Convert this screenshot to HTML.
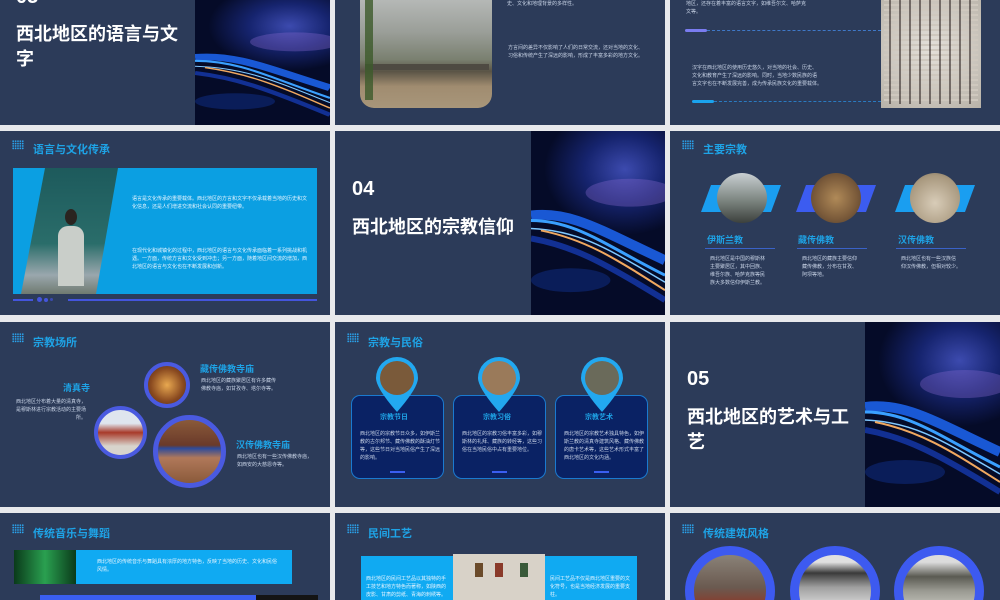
<!DOCTYPE html>
<html><head><meta charset="utf-8">
<style>
*{margin:0;padding:0;box-sizing:border-box}
html{width:1000px;height:600px;overflow:hidden}
body{width:1000px;height:600px;background:#e8e9ec;position:relative;overflow:hidden;font-family:"Liberation Sans","Noto Sans CJK SC",sans-serif}
.s{position:absolute;background:#2c3b59;overflow:hidden}
.a{position:absolute}
.t{position:absolute;color:#1ea3e6;font-weight:bold;font-size:11px;white-space:nowrap}
.big{position:absolute;color:#fff;font-weight:bold;font-size:18px;line-height:25px}
.num{position:absolute;color:#fff;font-weight:bold;font-size:20px}
.p{position:absolute;color:#c8d3e6;font-size:5px;line-height:8px}
.grid{position:absolute;width:12px;height:10px;background-image:radial-gradient(circle,#2aa6f0 0.8px,transparent 1px);background-size:2.4px 2.4px}
</style></head><body>

<svg width="0" height="0" style="position:absolute"><defs>
<radialGradient id="gl" cx="0.7" cy="0.35" r="0.6"><stop offset="0" stop-color="#4a5ad0"/><stop offset=".5" stop-color="#1a2a80"/><stop offset="1" stop-color="#050b28"/></radialGradient>
<symbol id="w" viewBox="0 0 135 185" preserveAspectRatio="none">
<rect width="135" height="185" fill="#050b28"/>
<rect width="135" height="110" fill="url(#gl)" opacity=".8"/>
<ellipse cx="100" cy="62" rx="45" ry="14" fill="#8a6ad0" opacity=".35"/>
<path d="M0 85 C40 80 70 100 135 130" stroke="#1e6cff" stroke-width="10" fill="none" opacity=".8"/>
<path d="M0 90 C45 90 75 115 135 145" stroke="#3aa0ff" stroke-width="3" fill="none"/>
<path d="M0 98 C50 100 80 120 135 152" stroke="#7fc8ff" stroke-width="1.5" fill="none"/>
<path d="M10 100 C60 110 95 135 135 160" stroke="#f0a860" stroke-width="2" fill="none"/>
<path d="M0 108 C40 115 70 130 135 170" stroke="#1840c0" stroke-width="6" fill="none" opacity=".7"/>
<ellipse cx="40" cy="150" rx="40" ry="12" fill="#0d2a7a" opacity=".6"/>
</symbol></defs></svg>

<!-- Row 0 -->
<div class="s" style="left:0;top:0;width:330px;height:125px">
 <div class="num" style="left:16px;top:-14px">03</div>
 <div class="big" style="left:16px;top:22px;width:168px">西北地区的语言与文字</div>
 <svg class="a" style="left:195px;top:0" width="135" height="125"><use href="#w" width="135" height="125"/></svg>
</div>
<div class="s" style="left:335px;top:0;width:330px;height:125px">
 <div class="a" style="left:25px;top:0;width:132px;height:108px;border-radius:0 0 14px 14px;background:linear-gradient(180deg,#b5b8b6 0%,#9a9e98 30%,#7a8070 55%,#5a5446 66%,#a08c70 80%,#a8967a 100%)"></div>
 <div class="a" style="left:30px;top:64px;width:124px;height:6px;background:#4e4a42"></div>
 <div class="a" style="left:30px;top:0;width:8px;height:100px;background:#3c5a2a;opacity:.8"></div>
 <div class="p" style="left:172px;top:0">史、文化和地理背景的多样性。</div>
 <div class="p" style="left:173px;top:44px">方言间的差异不仅影响了人们的日常交流，还对当地的文化、<br>习俗和传统产生了深远的影响，形成了丰富多彩的地方文化。</div>
</div>
<div class="s" style="left:670px;top:0;width:330px;height:125px">
 <div class="p" style="left:16px;top:0">地区，还存在着丰富的语言文字，如维吾尔文、哈萨克<br>文等。</div>
 <div class="a" style="left:15px;top:29px;width:22px;height:3px;border-radius:2px;background:#7a7cf0"></div>
 <div class="a" style="left:37px;top:30px;width:174px;border-top:1px dashed #3f78c8"></div>
 <div class="p" style="left:22px;top:64px">汉字在西北地区的使用历史悠久，对当地的社会、历史、<br>文化和教育产生了深远的影响。同时，当地少数民族的语<br>言文字也在不断发展完善，成为传承民族文化的重要载体。</div>
 <div class="a" style="left:22px;top:100px;width:22px;height:3px;border-radius:2px;background:#1aa3ee"></div>
 <div class="a" style="left:44px;top:101px;width:167px;border-top:1px dashed #2a7ac0"></div>
 <div class="a" style="left:211px;top:0;width:100px;height:108px;background:radial-gradient(circle at 50% 45%,#e4e0da,#b8b2a8);"></div>
 <div class="a" style="left:214px;top:0;width:94px;height:104px;background-image:repeating-linear-gradient(90deg,transparent 0 5px,rgba(40,30,30,.55) 5px 7px,transparent 7px 10px),repeating-linear-gradient(0deg,transparent 0 3px,#cfc8be 3px 5px)"></div>
</div>

<!-- Row 1 -->
<div class="s" style="left:0;top:131px;width:330px;height:184px">
 <div class="grid" style="left:12px;top:9px"></div>
 <div class="t" style="left:33px;top:10px">语言与文化传承</div>
 <div class="a" style="left:13px;top:37px;width:304px;height:126px;background:#0b9fe2"></div>
 <div class="a" style="left:13px;top:37px;width:106px;height:126px;background:linear-gradient(180deg,#1d5a5c,#2a6d6a 60%,#9aa7ad 85%,#6f7a70);clip-path:polygon(32px 0,105px 0,83px 126px,8px 126px)"></div>
 <div class="a" style="left:58px;top:95px;width:26px;height:60px;border-radius:10px 10px 0 0;background:#c9cec9"></div>
 <div class="a" style="left:65px;top:78px;width:12px;height:16px;border-radius:50%;background:#2a2420"></div>
 <div class="p" style="left:132px;top:64px;color:#e4f4ff">语言是文化传承的重要载体。西北地区的方言和文字不仅承载着当地的历史和文<br>化信息，还是人们增进交流和社会认同的重要纽带。</div>
 <div class="p" style="left:132px;top:116px;color:#e4f4ff">在现代化和城镇化的过程中，西北地区的语言与文化传承面临着一系列挑战和机<br>遇。一方面，传统方言和文化受到冲击；另一方面，随着地区间交流的增加，西<br>北地区的语言与文化也在不断发展和创新。</div>
 <div class="a" style="left:13px;top:168px;width:20px;height:2px;background:#4455dd"></div>
 <div class="a" style="left:37px;top:166px;width:5px;height:5px;border-radius:50%;background:#4455dd"></div>
 <div class="a" style="left:44px;top:167px;width:4px;height:4px;border-radius:50%;background:#4455dd"></div>
 <div class="a" style="left:50px;top:167px;width:3px;height:3px;border-radius:50%;background:#3a4ab0"></div>
 <div class="a" style="left:68px;top:168px;width:249px;height:2px;background:#4455dd"></div>
</div>
<div class="s" style="left:335px;top:131px;width:330px;height:184px">
 <div class="num" style="left:17px;top:47px">04</div>
 <div class="big" style="left:17px;top:84px">西北地区的宗教信仰</div>
 <svg class="a" style="left:196px;top:0" width="134" height="184"><use href="#w" width="134" height="184"/></svg>
</div>
<div class="s" style="left:670px;top:131px;width:330px;height:184px">
 <div class="grid" style="left:12px;top:9px"></div>
 <div class="t" style="left:33px;top:10px">主要宗教</div>
 <div class="a" style="left:31px;top:54px;width:80px;height:27px;background:#1a9ef0;clip-path:polygon(10px 0,100% 0,calc(100% - 10px) 100%,0 100%)"></div>
 <div class="a" style="left:47px;top:42px;width:50px;height:50px;border-radius:50%;background:linear-gradient(180deg,#c9cfd2,#7c8580 55%,#3c403c)"></div>
 <div class="t" style="left:37px;top:102px;font-size:9px">伊斯兰教</div>
 <div class="a" style="left:35px;top:117px;width:70px;height:1px;background:#3a62c8"></div>
 <div class="p" style="left:40px;top:124px">西北地区是中国的穆斯林<br>主要聚居区，其中回族、<br>维吾尔族、哈萨克族等民<br>族大多数信仰伊斯兰教。</div>

 <div class="a" style="left:126px;top:54px;width:80px;height:27px;background:#3c5cf0;clip-path:polygon(10px 0,100% 0,calc(100% - 10px) 100%,0 100%)"></div>
 <div class="a" style="left:141px;top:42px;width:50px;height:50px;border-radius:50%;background:radial-gradient(circle,#b08a58,#7a5a3a 60%,#4a3a30)"></div>
 <div class="t" style="left:128px;top:102px;font-size:9px">藏传佛教</div>
 <div class="a" style="left:127px;top:117px;width:70px;height:1px;background:#3a62c8"></div>
 <div class="p" style="left:132px;top:124px">西北地区的藏族主要信仰<br>藏传佛教，分布在甘孜、<br>阿坝等地。</div>

 <div class="a" style="left:225px;top:54px;width:80px;height:27px;background:#1a9ef0;clip-path:polygon(10px 0,100% 0,calc(100% - 10px) 100%,0 100%)"></div>
 <div class="a" style="left:240px;top:42px;width:50px;height:50px;border-radius:50%;background:radial-gradient(circle at 50% 60%,#d8ccb8,#a8987e 70%,#6a6050)"></div>
 <div class="t" style="left:228px;top:102px;font-size:9px">汉传佛教</div>
 <div class="a" style="left:226px;top:117px;width:70px;height:1px;background:#3a62c8"></div>
 <div class="p" style="left:231px;top:124px">西北地区也有一些汉族信<br>仰汉传佛教，但相对较少。</div>
</div>

<!-- Row 2 -->
<div class="s" style="left:0;top:322px;width:330px;height:185px">
 <div class="grid" style="left:12px;top:11px"></div>
 <div class="t" style="left:33px;top:12px">宗教场所</div>
 <div class="t" style="left:63px;top:59px;font-size:9px">清真寺</div>
 <div class="p" style="left:14px;top:76px;text-align:right;width:72px">西北地区分布着大量的清真寺，<br>是穆斯林进行宗教活动的主要场<br>所。</div>
 <div class="a" style="left:144px;top:40px;width:46px;height:46px;border-radius:50%;border:4px solid #4a5ae0;background:radial-gradient(circle,#e8a850,#8a4a20 60%,#4a2a18)"></div>
 <div class="a" style="left:94px;top:84px;width:53px;height:53px;border-radius:50%;border:4px solid #4a5ae0;background:linear-gradient(180deg,#dfe5ee 30%,#a83a2a 50%,#d8d4cc 80%)"></div>
 <div class="a" style="left:153px;top:93px;width:73px;height:73px;border-radius:50%;border:5px solid #4a5ae0;background:linear-gradient(180deg,#8a5a3a,#6a3a2a 40%,#2d4a9a 45%,#b0785a 60%,#8a5a3a)"></div>
 <div class="t" style="left:200px;top:40px;font-size:9px">藏传佛教寺庙</div>
 <div class="p" style="left:201px;top:55px">西北地区的藏族聚居区有许多藏传<br>佛教寺庙，如甘孜寺、塔尔寺等。</div>
 <div class="t" style="left:236px;top:116px;font-size:9px">汉传佛教寺庙</div>
 <div class="p" style="left:237px;top:131px">西北地区也有一些汉传佛教寺庙，<br>如西安的大慈恩寺等。</div>
</div>
<div class="s" style="left:335px;top:322px;width:330px;height:185px">
 <div class="grid" style="left:12px;top:11px"></div>
 <div class="t" style="left:33px;top:12px">宗教与民俗</div>
 <div class="a" style="left:16px;top:73px;width:93px;height:84px;border-radius:9px;border:1px solid #1a7ad0;background:#0a2264"></div>
 <div class="a" style="left:118px;top:73px;width:93px;height:84px;border-radius:9px;border:1px solid #1a7ad0;background:#0a2264"></div>
 <div class="a" style="left:220px;top:73px;width:93px;height:84px;border-radius:9px;border:1px solid #1a7ad0;background:#0a2264"></div>
 <svg class="a" style="left:0;top:0" width="330" height="100">
  <g fill="#22a8f0"><path d="M41 56 a21 21 0 1 1 42 0 q0 10 -21 34 q-21 -24 -21 -34z"/><path d="M143 56 a21 21 0 1 1 42 0 q0 10 -21 34 q-21 -24 -21 -34z"/><path d="M246 56 a21 21 0 1 1 42 0 q0 10 -21 34 q-21 -24 -21 -34z"/></g>
  <circle cx="62" cy="56" r="17" fill="#7a5a3a"/><circle cx="164" cy="56" r="17" fill="#9a7a5a"/><circle cx="267" cy="56" r="17" fill="#6a6a5a"/>
 </svg>
 <div class="t" style="left:45px;top:90px;font-size:7px">宗教节日</div>
 <div class="t" style="left:148px;top:90px;font-size:7px">宗教习俗</div>
 <div class="t" style="left:250px;top:90px;font-size:7px">宗教艺术</div>
 <div class="p" style="left:25px;top:108px;width:80px">西北地区的宗教节日众多，如伊斯兰教的古尔邦节、藏传佛教的酥油灯节等，这些节日对当地民俗产生了深远的影响。</div>
 <div class="p" style="left:127px;top:108px;width:80px">西北地区的宗教习俗丰富多彩，如穆斯林的礼拜、藏族的转经等，这些习俗在当地民俗中占有重要地位。</div>
 <div class="p" style="left:229px;top:108px;width:80px">西北地区的宗教艺术独具特色，如伊斯兰教的清真寺建筑风格、藏传佛教的唐卡艺术等，这些艺术形式丰富了西北地区的文化内涵。</div>
 <div class="a" style="left:55px;top:149px;width:15px;height:2px;background:#3a5ef0"></div>
 <div class="a" style="left:157px;top:149px;width:15px;height:2px;background:#3a5ef0"></div>
 <div class="a" style="left:259px;top:149px;width:15px;height:2px;background:#3a5ef0"></div>
</div>
<div class="s" style="left:670px;top:322px;width:330px;height:185px">
 <div class="num" style="left:17px;top:46px">05</div>
 <div class="big" style="left:17px;top:83px;width:168px">西北地区的艺术与工艺</div>
 <svg class="a" style="left:195px;top:0" width="135" height="185"><use href="#w" width="135" height="185"/></svg>
</div>

<!-- Row 3 -->
<div class="s" style="left:0;top:513px;width:330px;height:87px">
 <div class="grid" style="left:12px;top:11px"></div>
 <div class="t" style="left:33px;top:12px">传统音乐与舞蹈</div>
 <div class="a" style="left:14px;top:37px;width:62px;height:34px;background:linear-gradient(90deg,#0a3a1a,#2aa050 50%,#0a3a1a)"></div>
 <div class="a" style="left:76px;top:37px;width:216px;height:34px;background:#10aaf2"></div>
 <div class="p" style="left:97px;top:45px;color:#e4f4ff">西北地区的传统音乐与舞蹈具有浓厚的地方特色，反映了当地的历史、文化和民俗<br>风情。</div>
 <div class="a" style="left:40px;top:82px;width:216px;height:5px;background:#3a5ef0"></div>
 <div class="a" style="left:256px;top:82px;width:62px;height:5px;background:#141414"></div>
</div>
<div class="s" style="left:335px;top:513px;width:330px;height:87px">
 <div class="grid" style="left:12px;top:11px"></div>
 <div class="t" style="left:33px;top:12px">民间工艺</div>
 <div class="a" style="left:26px;top:43px;width:92px;height:44px;background:#10aaf2"></div>
 <div class="a" style="left:118px;top:41px;width:92px;height:46px;background:#d8d2c8"></div>
 <div class="a" style="left:140px;top:50px;width:8px;height:14px;background:#6a4a2a"></div>
 <div class="a" style="left:160px;top:50px;width:8px;height:14px;background:#8a3a2a"></div>
 <div class="a" style="left:185px;top:50px;width:8px;height:14px;background:#3a5a3a"></div>
 <div class="a" style="left:210px;top:43px;width:92px;height:44px;background:#10aaf2"></div>
 <div class="p" style="left:31px;top:62px;color:#e4f4ff">西北地区的民间工艺品以其独特的手<br>工技艺和地方特色而著称，如陕西的<br>皮影、甘肃的剪纸、青海的刺绣等。</div>
 <div class="p" style="left:215px;top:62px;color:#e4f4ff">民间工艺品不仅是西北地区重要的文<br>化符号，也是当地经济发展的重要支<br>柱。</div>
</div>
<div class="s" style="left:670px;top:513px;width:330px;height:87px">
 <div class="grid" style="left:12px;top:11px"></div>
 <div class="t" style="left:33px;top:12px">传统建筑风格</div>
 <div class="a" style="left:15px;top:33px;width:90px;height:90px;border-radius:50%;border:9px solid #3d5af0;background:linear-gradient(180deg,#8a8278,#6a5a50 45%,#8a3a2a 70%)"></div>
 <div class="a" style="left:120px;top:33px;width:90px;height:90px;border-radius:50%;border:9px solid #3d5af0;background:linear-gradient(180deg,#e0e0e0 10%,#3a3a3a 25%,#a0a0a0 45%,#d8d8d8 70%)"></div>
 <div class="a" style="left:224px;top:33px;width:90px;height:90px;border-radius:50%;border:9px solid #3d5af0;background:linear-gradient(180deg,#dcdcdc 10%,#5a5a52 30%,#9a9a92 50%,#c8c8c0 75%)"></div>
</div>
</body></html>
